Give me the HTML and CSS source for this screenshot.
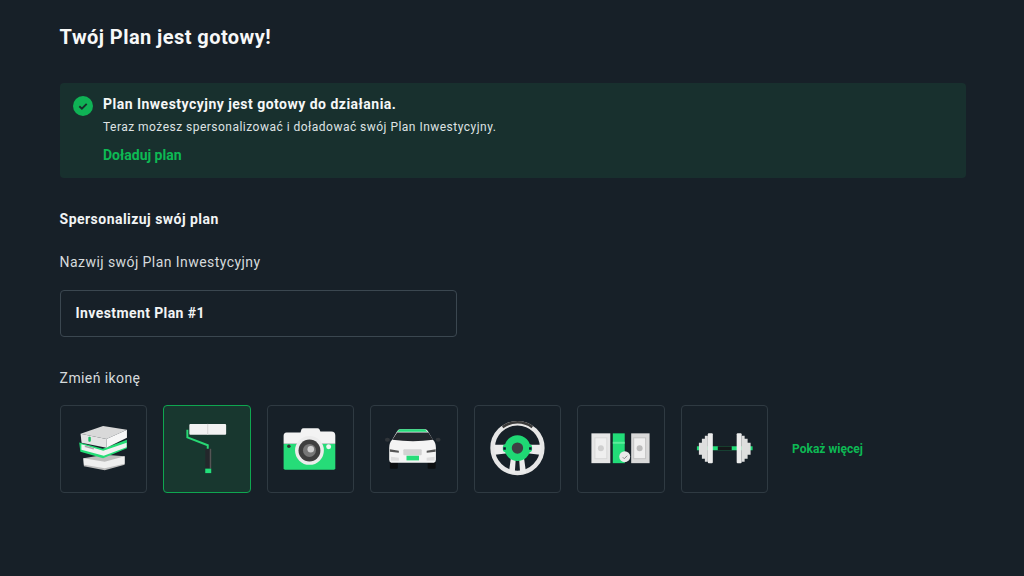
FILE: index.html
```html
<!DOCTYPE html>
<html lang="pl">
<head>
<meta charset="utf-8">
<title>Twój Plan jest gotowy!</title>
<link rel="stylesheet" href="styles.css">
</head>
<body>
<main class="page">
  <h1 class="title">Twój Plan jest gotowy!</h1>
  <section class="alert">
    <svg class="alert-icon" viewBox="0 0 20 20"><circle cx="10" cy="10" r="10" fill="#0fb255"/><path d="M6.300 10.200l2.600 2.500 4.800-4.800" fill="none" stroke="#17302c" stroke-width="1.900"/></svg>
    <div class="alert-body">
      <p class="alert-title">Plan Inwestycyjny jest gotowy do działania.</p>
      <p class="alert-text">Teraz możesz spersonalizować i doładować swój Plan Inwestycyjny.</p>
      <a class="alert-link">Doładuj plan</a>
    </div>
  </section>
  <h2 class="subtitle">Spersonalizuj swój plan</h2>
  <label class="label name-label">Nazwij swój Plan Inwestycyjny</label>
  <div class="input">Investment Plan #1</div>
  <p class="label icon-label">Zmień ikonę</p>
  <div class="icons">
    <div class="tile">
      <svg class="art" viewBox="0 0 88 88">
        <path d="M23.500 53.500L45 50l20 1.500V60L45 65.700 24 61.700z" fill="#bdbdbd"/>
        <path d="M23.500 53.500L45 57l20-5.500V59L45 63.500 24 60z" fill="#efefef"/>
        <path d="M19.300 37.700L43 44l24.300-9v8.500l-24 10L20.500 47z" fill="#24dd76"/>
        <path d="M21.500 39.500L43.500 46 67 38v4.500L44 51 21.500 45z" fill="#f2f2f2"/>
        <path d="M25 41.500l9 2.500" stroke="#a9a9a9" stroke-width="1.500"/>
        <path d="M20.700 29L43.300 21l24 4-20.600 9.300z" fill="#d9d9d9"/>
        <path d="M20.700 29l26 5.300V43L21.700 38z" fill="#e4e4e4"/>
        <path d="M46.700 34.300L67.300 25v8L46.700 43z" fill="#f7f7f7"/>
        <rect x="28.500" y="32" width="2.500" height="5" rx="1" fill="#18c060"/>
      </svg>
    </div>
    <div class="tile is-active">
      <svg class="art" viewBox="0 0 88 88">
        <rect x="26.500" y="19" width="37" height="11" rx="1" fill="#f2f2f2"/>
        <rect x="44.500" y="19" width="1" height="11" fill="#d5d5d5"/>
        <path d="M24.500 25v7.500l20.500 8v4" fill="none" stroke="#27d873" stroke-width="2"/>
        <rect x="42.500" y="44" width="6" height="20" fill="#23272b"/>
        <rect x="47" y="44" width="1.500" height="20" fill="#555"/>
        <rect x="42.500" y="64" width="6" height="4.500" fill="#22e07a"/>
      </svg>
    </div>
    <div class="tile">
      <svg class="art" viewBox="0 0 88 88">
        <path d="M16.700 39v24.500q0 1.500 1.500 1.500h49q1.500 0 1.500-1.500V39z" fill="#26dc78"/>
        <path d="M16.700 39v-8q0-3 3-3.300h14l1-3.200q.5-1.200 2-1.200h14q1.500 0 2 1.200l1 2.200h11q4 0 4 4V39z" fill="#f3f3f3"/>
        <circle cx="22" cy="41.500" r="1.800" fill="#333"/>
        <circle cx="62" cy="42" r="2.500" fill="#eef6f2"/>
        <circle cx="42.700" cy="45.700" r="14.500" fill="#ececec"/>
        <circle cx="42.700" cy="45.700" r="11" fill="#3e3e3e"/>
        <circle cx="42.700" cy="45.700" r="6.500" fill="#777"/>
        <circle cx="44" cy="44.500" r="3.300" fill="#cfcfcf"/>
      </svg>
    </div>
    <div class="tile">
      <svg class="art" viewBox="0 0 88 88">
        <rect x="20" y="56" width="8" height="8" rx="1" fill="#0d0f11"/>
        <rect x="58" y="56" width="8" height="8" rx="1" fill="#0d0f11"/>
        <ellipse cx="17.500" cy="35" rx="2.500" ry="2" fill="#30353a"/>
        <ellipse cx="68.500" cy="35" rx="2.500" ry="2" fill="#30353a"/>
        <path d="M19.300 43q0-5 3-8l5-8.500q1-2.200 3-2.200h25q2 0 3 2.200l5 8.500q3 3 3 8v12q0 2.500-2 3H21.300q-2-.5-2-3z" fill="#f4f4f4"/>
        <path d="M22.500 35l4.800-7.300h31.400l4.800 7.300q-20 3-41 0z" fill="#23272c"/>
        <path d="M27 27l3-2.700h25l3 2.700z" fill="#25dd78"/>
        <path d="M20 44.500l9 1.500v2l-9-1zM66 44.500l-9 1.500v2l9-1z" fill="#555"/>
        <rect x="33.500" y="44.500" width="18.500" height="6" rx="1" fill="#d2d2d2"/>
        <path d="M21 52l8 1v3h-8zM65 52l-8 1v3h8z" fill="#dedede"/>
        <rect x="36.700" y="51" width="12.600" height="4.700" fill="#25dd78"/>
      </svg>
    </div>
    <div class="tile">
      <svg class="art" viewBox="0 0 88 88">
        <circle cx="43.700" cy="43.300" r="25" fill="none" stroke="#e6e6e6" stroke-width="4.600"/>
        <path d="M28 21a27.300 27.300 0 0 1 31.400 0l-1.500 2.300a24 24 0 0 0-28.400 0z" fill="#3a3a3a"/>
        <path d="M20 40l14 0v8.500L21 50zM67.400 40l-14 0v8.500L66.400 50zM37 54h5l-1 14.500h-6zM45.400 54h5l2 14.500h-6z" fill="#ececec"/>
        <circle cx="43.700" cy="43.300" r="13" fill="#1fd874"/>
        <rect x="29" y="39.500" width="29.400" height="8" rx="3" fill="#1fd874"/>
        <circle cx="43.700" cy="43.300" r="5.700" fill="#3d4043"/>
        <rect x="29.500" y="42.500" width="2.500" height="2.500" fill="#113"/>
        <rect x="55.400" y="42.500" width="2.500" height="2.500" fill="#113"/>
      </svg>
    </div>
    <div class="tile">
      <svg class="art" viewBox="0 0 88 88">
        <rect x="14.500" y="28.500" width="19" height="30" fill="#e6e6e6"/>
        <rect x="18" y="33" width="12" height="21" fill="#efefef" stroke="#d8d8d8"/>
        <circle cx="24" cy="43.500" r="3" fill="#cfcfcf"/>
        <rect x="36" y="28.500" width="12" height="30" fill="#22dc78"/>
        <rect x="36" y="37" width="12" height="2" fill="#5ceb9b"/>
        <rect x="54.500" y="28.500" width="18.500" height="30" fill="#d9d9d9"/>
        <rect x="57" y="33" width="12" height="21" fill="#efefef" stroke="#c4c4c4"/>
        <circle cx="63" cy="43.500" r="3" fill="#bcbcbc"/>
        <circle cx="48" cy="52" r="5.500" fill="#e9e9e9"/>
        <path d="M46 52.500l1.500 1.500 3-3" fill="none" stroke="#888" stroke-width="1"/>
      </svg>
    </div>
    <div class="tile">
      <svg class="art" viewBox="0 0 88 88">
        <rect x="16" y="41.500" width="56" height="4" fill="#22dc78"/>
        <rect x="37" y="41.500" width="14" height="4" fill="#15181a"/>
        <path d="M18 38h3v-4h3v-3h3v26h-3v-3h-3v-4h-3z" fill="#dedede"/>
        <rect x="27" y="28.500" width="5" height="30" rx="1" fill="#ececec"/>
        <path d="M70 38h-3v-4h-3v-3h-3v26h3v-3h3v-4h3z" fill="#dedede"/>
        <rect x="56" y="28.500" width="5" height="30" rx="1" fill="#ececec"/>
      </svg>
    </div>
    <a class="more">Pokaż więcej</a>
  </div>
</main>
</body>
</html>
```
FILE: styles.css
```css
* {
  box-sizing: border-box;
}

html, body {
  margin: 0;
  height: 100%;
}

body {
  background: #172028;
  color: #f2f4f5;
  font-family: Roboto, "Noto Sans", sans-serif;
  overflow: hidden;
}

.page {
  width: 906.4px;
  margin-left: 59.6px;
  padding-top: 25px;
}

.title {
  margin: 0;
  font-size: 20px;
  line-height: 24px;
  font-weight: 700;
  letter-spacing: 0.44px;
  color: #f7f8f8;
}

.alert {
  display: flex;
  gap: 10.4px;
  height: 95px;
  margin-top: 34px;
  padding: 13px 13px 0;
  background: #18302e;
  border-radius: 4px;
}

.alert-icon {
  width: 20px;
  height: 20px;
  flex: none;
}

.alert-body {
  display: flex;
  flex-direction: column;
  align-items: flex-start;
}

.alert-title {
  margin: 0;
  font-size: 14px;
  line-height: 16px;
  font-weight: 700;
  letter-spacing: 0.48px;
  color: #f5f7f7;
}

.alert-text {
  margin: 8px 0 0;
  font-size: 12px;
  line-height: 14px;
  letter-spacing: 0.48px;
  color: #dfe3e4;
}

.alert-link {
  margin-top: 13px;
  font-size: 14px;
  line-height: 16px;
  font-weight: 700;
  color: #0db954;
}

.subtitle {
  margin: 33px 0 0;
  font-size: 14px;
  line-height: 16px;
  font-weight: 700;
  letter-spacing: 0.46px;
  color: #f2f4f5;
}

.label {
  display: block;
  margin: 0;
  font-size: 14px;
  line-height: 18px;
  letter-spacing: 0.43px;
  color: #d6dadc;
}

.name-label {
  margin-top: 26px;
}

.input {
  display: flex;
  align-items: center;
  width: 397.5px;
  height: 47px;
  margin-top: 19px;
  padding: 0 15px 2px;
  border: 1px solid #3b4750;
  border-radius: 4px;
  font-size: 14px;
  font-weight: 700;
  letter-spacing: 0.4px;
  color: #f2f4f5;
}

.icon-label {
  margin-top: 32px;
  letter-spacing: 0.4px;
}

.icons {
  display: flex;
  align-items: center;
  gap: 16px;
  margin-top: 18px;
}

.tile {
  flex: none;
  width: 87.5px;
  height: 87.5px;
  border: 1px solid #2f3a42;
  border-radius: 4px;
}

.tile.is-active {
  background: #18372f;
  border-color: #0fa650;
}

.art {
  display: block;
  width: 87.5px;
  height: 87.5px;
  margin: -1px;
}

.more {
  margin-left: 8px;
  font-size: 12px;
  font-weight: 700;
  color: #0db954;
}
```
